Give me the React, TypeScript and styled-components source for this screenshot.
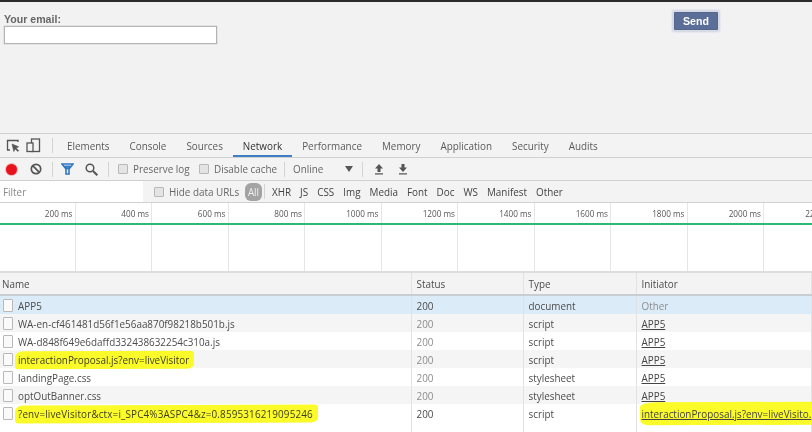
import React from 'react';
import styled, { createGlobalStyle } from 'styled-components';

const Global = createGlobalStyle`
  html, body { margin: 0; padding: 0; background: #fff; }
  body { font-family: "Open Sans", "Noto Sans", "Liberation Sans", sans-serif; }
`;

const Shell = styled.div`
  width: 812px; height: 432px; overflow: hidden; display: flex; flex-direction: column;
  background: #fff; color: #4a4a4a; font-size: 9.9px; filter: blur(0.45px);
`;
const TopEdge = styled.div`height: 2px; background: #2c2c2c; flex: none;`;
const Page = styled.div`
  height: 131px; flex: none; background: #f2f2f2; display: flex; justify-content: space-between;
  align-items: flex-start; padding: 8px 92px 0 4px; box-sizing: border-box;
`;
const EmailField = styled.label`
  display: flex; flex-direction: column; margin-top: 2px;
  font: bold 10.6px/14px "Liberation Sans", sans-serif; color: #666;
`;
const EmailInput = styled.span`
  display: block; width: 211px; height: 16px; background: #fff; border: 1px solid #b4b4b4;
  box-shadow: 0 0 1px #999;
`;
const SendButton = styled.button`
  width: 44px; height: 18px; margin: 0; padding: 0; box-sizing: content-box; background: #5b6e98; color: #fff;
  border: 2px solid #d6dbe6; box-shadow: inset 0 0 0 1px #55668e, 0 0 0 1px #e6e8ee; border-radius: 3px;
  font: bold 10.6px/16px "Liberation Sans", sans-serif;
`;
const Bar = styled.div<{ $h: number }>`
  height: ${p => p.$h}px; flex: none; box-sizing: border-box; background: #f3f3f3;
  border-top: 1px solid #d0d0d0; display: flex; align-items: center; white-space: nowrap;
`;
const IconSlot = styled.span<{ $w: number }>`
  flex: none; width: ${p => p.$w}px; display: flex; align-items: center; justify-content: center;
`;
const Sep = styled.i<{ $l: number; $r: number }>`
  flex: none; width: 1px; height: 15px; background: #d4d4d4; margin: 0 ${p => p.$r}px 0 ${p => p.$l}px;
`;
const Tab = styled.span<{ $active?: boolean }>`
  align-self: stretch; display: flex; align-items: center; padding: 0 10px;
  color: ${p => p.$active ? '#333' : '#5a5a5a'};
  box-shadow: ${p => p.$active ? 'inset 0 -2px 0 #3f7fc4' : 'none'};
`;
const Record = styled.span`
  width: 11px; height: 11px; border-radius: 50%; background: #e8121c; display: block; box-shadow: 0 0 0 1px #f2b5b5;
`;
const Box = styled.span`
  flex: none; display: block; width: 8px; height: 8px; background: #e4e4e4; border: 1px solid #b8b8b8; border-radius: 1px; margin-right: 5px;
`;
const Check = styled.span<{ $w: number }>`
  flex: none; display: flex; align-items: center; width: ${p => p.$w}px; color: #666;
`;
const Label = styled.span<{ $w: number }>`
  flex: none; width: ${p => p.$w}px; color: #666;
`;
const Filter = styled.span`
  flex: none; align-self: stretch; width: 143px; background: #fff; color: #8a8a8a; display: flex; align-items: center;
  padding-left: 3px; box-sizing: border-box; margin-right: 11px;
`;
const AllPill = styled.span`
  flex: none; background: #a3a3a3; color: #eee; border-radius: 6px; height: 18px; line-height: 18px; width: 17px; text-align: center; margin-right: 2px;
`;
const TypeFilter = styled.span`
  flex: none; margin-right: 9px; color: #444;
`;
const Overview = styled.div`
  position: relative; height: 70px; flex: none; display: flex; background: #fff; border-top: 1px solid #d0d0d0;
  box-sizing: border-box; border-bottom: 1px solid #ddd;
`;
const Tick = styled.div`
  flex: none; width: 76.5px; box-sizing: border-box; border-right: 1px solid #e6e6e6; text-align: right;
  padding: 4px 2px 0 0; color: #555; font-size: 8.2px; line-height: 13px; white-space: nowrap;
  &:first-child { width: 75.5px; }
`;
const GreenLine = styled.div`
  position: absolute; left: 0; right: 0; top: 20px; height: 2px; background: #2eb872;
`;
const Row = styled.div<{ $h?: number; $bg?: string }>`
  display: grid; grid-template-columns: 412px 112px 113px 175px; flex: none;
  height: ${p => p.$h ?? 18}px; background: ${p => p.$bg ?? '#fff'};
`;
const Cell = styled.div`
  display: flex; align-items: center; white-space: nowrap; padding: 1px 0 0 4.5px; min-width: 0;
  border-right: 1px solid #e2e2e2; color: #4c4c4c; box-sizing: border-box;
`;
const HeadRow = styled(Row)`
  border-bottom: 2px solid #c9ced3; box-sizing: border-box; background: #f3f3f3; border-top: 1px solid #ddd;
`;
const NameHead = styled(Cell)`padding-left: 2px;`;
const NameCell = styled(Cell)`padding-left: 3px;`;
const FileIcon = styled.span`
  flex: none; width: 8px; height: 11px; background: #fafafa; border: 1px solid #b9b9b9; margin-right: 5px; border-radius: 1px;
`;
const Muted = styled.span`color: #8d8d8d;`;
const Link = styled.span`color: #444; text-decoration: underline;`;
const Marker = styled.span<{ $wide?: boolean }>`
  position: relative; z-index: 0; color: #3e3e22; letter-spacing: ${p => p.$wide ? '0.15px' : 'normal'};
  &::before {
    content: ""; position: absolute; z-index: -1; left: -3px; right: -5px; top: -2px; bottom: -2px;
    background: #fbfb2a; border-radius: 8px 4px 7px 3px / 6px 3px 5px 4px; transform: rotate(-0.2deg);
  }
`;
const InitiatorMarker = styled(Marker)`
  &::before { left: -2px; right: -8px; top: -5px; bottom: -4px; border-radius: 16px 0 0 8px / 5px 0 0 6px; }
`;

const ticks = ['200 ms','400 ms','600 ms','800 ms','1000 ms','1200 ms','1400 ms','1600 ms','1800 ms','2000 ms','2200 ms'];
const rows = [
  { name: 'APP5', status: '200', type: 'document', init: 'Other', bg: '#dcebf8', dark: true, other: true },
  { name: 'WA-en-cf461481d56f1e56aa870f98218b501b.js', status: '200', type: 'script', init: 'APP5', bg: '#f5f5f5' },
  { name: 'WA-d848f649e6daffd332438632254c310a.js', status: '200', type: 'script', init: 'APP5', bg: '#fff' },
  { name: 'interactionProposal.js?env=liveVisitor', status: '200', type: 'script', init: 'APP5', bg: '#f5f5f5', mark: true },
  { name: 'landingPage.css', status: '200', type: 'stylesheet', init: 'APP5', bg: '#fff' },
  { name: 'optOutBanner.css', status: '200', type: 'stylesheet', init: 'APP5', bg: '#f5f5f5' },
  { name: '?env=liveVisitor&ctx=i_SPC4%3ASPC4&z=0.8595316219095246', status: '200', type: 'script', init: 'interactionProposal.js?env=liveVisito.', bg: '#fff', mark: true, dark: true, markInit: true },
];

const ic = { fill: 'none', stroke: '#555', strokeWidth: 1.3 };

export default function App() {
  return (
    <Shell>
      <Global />
      <TopEdge />
      <Page>
        <EmailField>Your email:<EmailInput /></EmailField>
        <SendButton>Send</SendButton>
      </Page>
      <Bar $h={24}>
        <IconSlot $w={25}>
          <svg width="14" height="14" viewBox="0 0 14 14" {...ic}>
            <path d="M12 3V1.5H1.5V11H4" />
            <path d="M6 5l1.8 7.5 1.4-2.6 2.6 2.6.9-.9-2.6-2.6 2.6-1.2z" fill="#555" strokeWidth="0.6" />
          </svg>
        </IconSlot>
        <IconSlot $w={17}>
          <svg width="15" height="15" viewBox="0 0 15 15" {...ic}>
            <rect x="5.5" y="1" width="8" height="12.5" />
            <rect x="1" y="5" width="6" height="8.5" fill="#f3f3f3" />
          </svg>
        </IconSlot>
        <Sep $l={10} $r={4} />
        <Tab>Elements</Tab>
        <Tab>Console</Tab>
        <Tab>Sources</Tab>
        <Tab $active>Network</Tab>
        <Tab>Performance</Tab>
        <Tab>Memory</Tab>
        <Tab>Application</Tab>
        <Tab>Security</Tab>
        <Tab>Audits</Tab>
      </Bar>
      <Bar $h={23}>
        <IconSlot $w={23}><Record /></IconSlot>
        <IconSlot $w={26}>
          <svg width="12" height="12" viewBox="0 0 12 12" fill="none" stroke="#555" strokeWidth="1.7">
            <circle cx="6" cy="6" r="4.7" /><path d="M2.7 2.7l6.6 6.6" />
          </svg>
        </IconSlot>
        <Sep $l={3} $r={3} />
        <IconSlot $w={22}>
          <svg width="13" height="12" viewBox="0 0 13 12" fill="#3f83cf" stroke="#2f76c4" strokeWidth="1">
            <path d="M1 1h11L8 6v5H5V6z" fill="none" strokeWidth="1.6" /><path d="M3.5 3h6L7.5 6h-2z" />
          </svg>
        </IconSlot>
        <IconSlot $w={26}>
          <svg width="13" height="13" viewBox="0 0 13 13" fill="none" stroke="#555" strokeWidth="1.5">
            <circle cx="5" cy="5" r="3.8" /><path d="M8 8l4.3 4.3" strokeWidth="2" />
          </svg>
        </IconSlot>
        <Sep $l={4} $r={9} />
        <Check $w={81}><Box />Preserve log</Check>
        <Check $w={85}><Box />Disable cache</Check>
        <Sep $l={0} $r={8} />
        <Label $w={52}>Online</Label>
        <svg width="8" height="6" viewBox="0 0 8 6" fill="#555"><path d="M0 0h8L4 6z" /></svg>
        <Sep $l={9} $r={4} />
        <IconSlot $w={24}>
          <svg width="10" height="12" viewBox="0 0 10 12" fill="#555"><path d="M5 1l4 4.5H6.5V9h-3V5.5H1zM1 10.3h8v1.3H1z" /></svg>
        </IconSlot>
        <IconSlot $w={24}>
          <svg width="10" height="12" viewBox="0 0 10 12" fill="#555"><path d="M3.5 1h3v3.5H9L5 9 1 4.5h2.5zM1 10.3h8v1.3H1z" /></svg>
        </IconSlot>
      </Bar>
      <Bar $h={22}>
        <Filter>Filter</Filter>
        <Check $w={91}><Box />Hide data URLs</Check>
        <AllPill>All</AllPill>
        <Sep $l={0} $r={7} />
        {['XHR','JS','CSS','Img','Media','Font','Doc','WS','Manifest','Other'].map(t => <TypeFilter key={t}>{t}</TypeFilter>)}
      </Bar>
      <Overview>
        {ticks.map(t => <Tick key={t}>{t}</Tick>)}
        <GreenLine />
      </Overview>
      <HeadRow $h={24}>
        <NameHead>Name</NameHead><Cell>Status</Cell><Cell>Type</Cell><Cell>Initiator</Cell>
      </HeadRow>
      {rows.map(r => (
        <Row key={r.name} $bg={r.bg}>
          <NameCell>
            <FileIcon />
            {r.mark ? <Marker $wide={r.markInit}>{r.name}</Marker> : r.name}
          </NameCell>
          <Cell>{r.dark ? r.status : <Muted>{r.status}</Muted>}</Cell>
          <Cell>{r.type}</Cell>
          <Cell>
            {r.other ? <Muted>{r.init}</Muted> : r.markInit ? <InitiatorMarker><Link>{r.init}</Link></InitiatorMarker> : <Link>{r.init}</Link>}
          </Cell>
        </Row>
      ))}
      <Row $h={10}><Cell /><Cell /><Cell /><Cell /></Row>
    </Shell>
  );
}
